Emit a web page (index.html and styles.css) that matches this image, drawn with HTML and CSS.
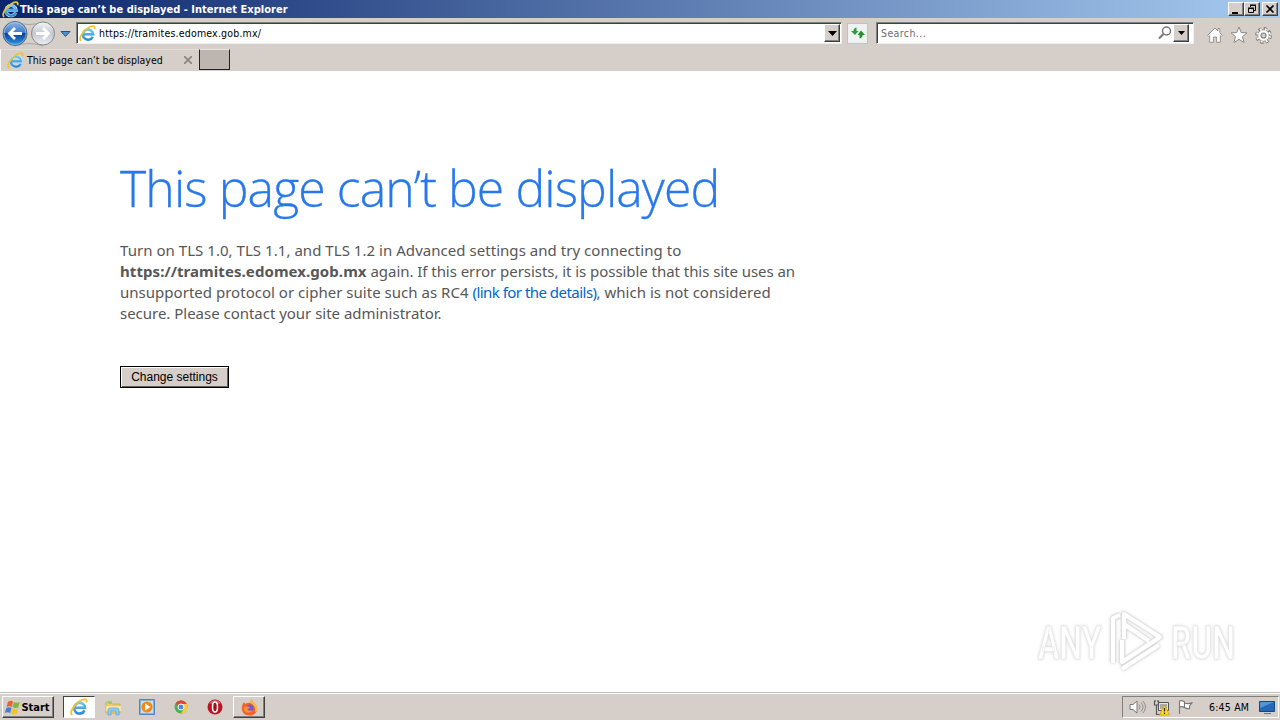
FILE: index.html
```html
<!DOCTYPE html>
<html lang="en">

<head>
  <meta charset="UTF-8">
  <meta name="viewport" content="width=device-width, initial-scale=1.0">
  <title>This page can’t be displayed</title>
  <link rel="stylesheet" href="styles.css">
</head>

<body>
  <!-- shared icon shapes -->
  <svg class="defs" width="0" height="0">
    <defs>
      <linearGradient id="ieBlue" x1="0" y1="0" x2="0" y2="1">
        <stop offset="0" stop-color="#69c8f5" />
        <stop offset="1" stop-color="#2f87d0" />
      </linearGradient>
      <linearGradient id="backBlue" x1="0" y1="0" x2="0" y2="1">
        <stop offset="0" stop-color="#8fb6e6" />
        <stop offset="0.48" stop-color="#3c78c8" />
        <stop offset="0.5" stop-color="#0b3f9c" />
        <stop offset="1" stop-color="#2f9be8" />
      </linearGradient>
      <linearGradient id="forwardGray" x1="0" y1="0" x2="0" y2="1">
        <stop offset="0" stop-color="#f5f6f8" />
        <stop offset="0.5" stop-color="#c3c8d0" />
        <stop offset="1" stop-color="#eceff3" />
      </linearGradient>
      <symbol id="ie" viewBox="0 0 16 16">
        <path d="M12.900 11A4.800 4.800 0 1 1 13.300 8.700H4.400" fill="none" stroke="#d8f0ff" stroke-width="3" />
        <path d="M12.900 11A4.800 4.800 0 1 1 13.300 8.700H4.400" fill="none" stroke="url(#ieBlue)" stroke-width="2.200" />
        <path d="M2 15C-.8 13 3.200 6.500 8 3.200 12 .4 15.700.2 14.700 4" fill="none" stroke="#efc230" stroke-width="1.600" />
      </symbol>
    </defs>
  </svg>

  <div class="titlebar">
    <svg class="title-icon" width="17" height="17"><use href="#ie" /></svg>
    <span class="title-text">This page can’t be displayed - Internet Explorer</span>
    <div class="window-buttons">
      <button><svg width="14" height="12"><path d="M3 9h6v2H3z" /></svg></button>
      <button><svg width="14" height="12"><path d="M5.500 4V2.500h5v5H9M5 2h6" fill="none" stroke="#000" /><path d="M3.500 5.500h5v4h-5zM3 5h6" fill="none" stroke="#000" /></svg></button>
      <button class="close"><svg width="14" height="12"><path d="M3.500 2.500l7 7M10.500 2.500l-7 7" stroke="#000" stroke-width="1.700" /></svg></button>
    </div>
  </div>

  <div class="navbar">
    <svg class="history" width="74" height="30" viewBox="0 0 74 30">
      <path d="M15 3Q29 8 43 3M15 27Q29 22 43 27" fill="none" stroke="#aaa7a4" />
      <circle cx="15" cy="14.500" r="12" fill="url(#backBlue)" stroke="#59677c" />
      <circle cx="15" cy="14.500" r="11" fill="none" stroke="#b8d3f0" stroke-opacity=".6" />
      <path d="M22 14.500H10M15 9L9.500 14.500l5.500 5.500" fill="none" stroke="#fff" stroke-width="2.800" />
      <circle cx="43" cy="14.500" r="11.500" fill="url(#forwardGray)" stroke="#85888c" />
      <path d="M36 14.500h12M43 9l5.500 5.500-5.500 5.500" fill="none" stroke="#fff" stroke-width="2.800" />
      <path d="M61 12.500h9l-4.500 5z" fill="#4f94cf" stroke="#24547f" />
    </svg>
    <div class="field address">
      <svg width="17" height="17"><use href="#ie" /></svg>
      <span>https://tramites.edomex.gob.mx/</span>
      <button class="drop"><svg width="9" height="5"><path d="M0 0h9L4.500 5z" /></svg></button>
    </div>
    <button class="refresh">
      <svg width="16" height="14" viewBox="0 0 16 14">
        <path d="M6.500 1.500Q3.500 2 3.500 5H1l4 4 3.500-4H6.500z" fill="#2c9b3c" />
        <path d="M9.500 12.500q3-.5 3-3.500H15l-4-4.500L7.500 9h2z" fill="#229030" />
      </svg>
    </button>
    <div class="field search">
      <span>Search...</span>
      <svg width="16" height="16" viewBox="0 0 16 16"><circle cx="9.500" cy="6" r="4" fill="none" stroke="#777" stroke-width="1.500" /><path d="M6.500 9L2 13.500" stroke="#777" stroke-width="2" /></svg>
      <button class="drop"><svg width="7" height="4"><path d="M0 0h7L3.500 4z" /></svg></button>
    </div>
    <div class="tools">
      <svg width="16" height="16" viewBox="0 0 16 16"><path d="M.7 8.300L8 1l2.800 2.800V1.700h2v4.100l2.500 2.500-1.200 1.200-.8-.8v6.600H9.600V10H6.400v5.300H2.700V8.700l-.8.800z" fill="#fff" stroke="#8d8985" stroke-width=".9" /></svg>
      <svg width="18" height="18" viewBox="0 0 18 18"><path d="M9 1l2.200 5.500 5.800.4-4.500 3.700 1.500 5.900L9 13.300l-5 3.200 1.500-5.900L1 6.900l5.800-.4z" fill="#fff" stroke="#8d8985" /></svg>
      <svg width="17" height="17" viewBox="0 0 16 16"><circle cx="8" cy="8" r="6.300" fill="none" stroke="#85807c" stroke-width="3.200" stroke-dasharray="3 1.948" /><circle cx="8" cy="8" r="5.400" fill="#fff" stroke="#85807c" stroke-width=".8" /><circle cx="8" cy="8" r="6" fill="none" stroke="#fff" stroke-width="2" stroke-dasharray="1.600 3.112" stroke-dashoffset="-.6" /><circle cx="8" cy="8" r="2.400" fill="#d4cec8" stroke="#85807c" /></svg>
    </div>
  </div>

  <div class="tabs">
    <div class="tab">
      <svg width="17" height="17"><use href="#ie" /></svg>
      <span>This page can’t be displayed</span>
      <svg class="tab-close" width="8" height="8"><path d="M0 0l8 8M8 0L0 8" stroke="#8d8783" stroke-width="1.800" /></svg>
    </div>
    <button class="new-tab"></button>
  </div>

  <main class="page">
    <h1>This page can’t be displayed</h1>
    <p class="message">
      <span class="line-one">Turn on TLS 1.0, TLS 1.1, and TLS 1.2 in Advanced settings and try connecting to</span><br>
      <strong>https://tramites.edomex.gob.mx</strong> <span class="line-two">again. If this error persists, it is possible that this site uses an</span><br>
      <span class="line-three">unsupported protocol or cipher suite such as RC4 <a>(link for the details)</a>, which is not considered</span><br>
      <span class="line-four">secure. Please contact your site administrator.</span>
    </p>
    <button class="settings">Change settings</button>

    <div class="watermark">
      <span class="any">ANY</span>
      <svg width="60" height="64" viewBox="0 0 60 64">
        <g fill="none" stroke="#dedede" stroke-width="5.500" stroke-linejoin="round">
          <path d="M7 54V9l7-3M18 30V5l36 23-38 25V31M18 15l25 17M16 60l37-24" />
        </g>
        <g fill="none" stroke="#fff" stroke-width="4" stroke-linejoin="round">
          <path d="M7 54V9l7-3M18 30V5l36 23-38 25V31M18 15l25 17M16 60l37-24" />
        </g>
      </svg>
      <span class="run">RUN</span>
    </div>
  </main>

  <footer class="taskbar">
    <button class="start">
      <svg width="17" height="17" viewBox="0 0 17 17">
        <path d="M4 3q3-2 5-.5L7.700 8Q5 6.500 2.500 8z" fill="#e8622a" />
        <path d="M9.800 3q3 1.500 6 0l-1.500 5.500q-3 1-5.800-.2z" fill="#79b943" />
        <path d="M2.300 9q3-1.500 5.200 0L6.200 14Q3.500 12.500.8 14z" fill="#3d82d0" />
        <path d="M8.300 9.500q3 1.200 5.800 0L12.500 15q-3 1-5.600-.5z" fill="#f3c32f" />
      </svg>
      <span>Start</span>
    </button>
    <div class="task active"><svg width="18" height="18"><use href="#ie" /></svg></div>
    <div class="task">
      <svg width="17" height="17" viewBox="0 0 17 17">
        <path d="M1 3h5l1 2h8v9H1z" fill="#e9cd6c" stroke="#c8a84c" stroke-width=".7" />
        <path d="M3 2h4v3H3z" fill="#9acb77" /><path d="M1 7h15v5H1z" fill="#f8e6a0" />
        <path d="M3 16v-5q0-2 2-2h7q2 0 2 2v5h-3v-4H6v4z" fill="#8fcdea" stroke="#5a9fc0" stroke-width=".6" />
      </svg>
    </div>
    <div class="task">
      <svg width="16" height="16" viewBox="0 0 16 16">
        <path d="M.5.5h15v15H.5z" fill="#7db5e3" stroke="#4c87bd" /><path d="M2 2h12v12H2z" fill="#c4dff5" />
        <circle cx="8" cy="8" r="5.600" fill="#f18a18" /><path d="M6 4.500l5.500 3.500L6 11.500z" fill="#fff" />
      </svg>
    </div>
    <div class="task">
      <svg width="14" height="14" viewBox="0 0 14 14">
        <circle cx="7" cy="7" r="6.500" fill="#4caf50" />
        <path d="M7 7L1.400 3.700A6.500 6.500 0 0 1 12.700 3.900H7z" fill="#df4535" />
        <path d="M7 4h5.800A6.500 6.500 0 0 1 7 13.500l3-5z" fill="#f7cd3b" />
        <circle cx="7" cy="7" r="3" fill="#4c8be8" stroke="#fff" stroke-width="1" />
      </svg>
    </div>
    <div class="task">
      <svg width="16" height="16" viewBox="0 0 16 16"><circle cx="8" cy="8" r="7.500" fill="#b91523" /><path d="M2 4Q8-2 14 4 8 7 2 4" fill="#d65a60" /><ellipse cx="8" cy="8" rx="2.500" ry="5" fill="#9d1020" stroke="#fff" stroke-width="1.500" /></svg>
    </div>
    <div class="task raised">
      <svg width="17" height="17" viewBox="0 0 17 17">
        <path d="M1.500 6Q2 3 3 3.500L4.500 5Q7 3 9 4q0-3 2-3.500Q11 3 13 4q4 3 3 7.500-2 5-7.500 5Q1 16 .7 9.500.7 7 1.500 6" fill="#f4602e" />
        <path d="M11 .5Q11 3 13 4q4 3 3 7.500L14 13q1-7-5-9 0-2 2-3.500" fill="#ffc43a" />
        <circle cx="9" cy="9" r="3.600" fill="#7958c8" /><path d="M3 8q3-1 6 0-1 2-3 2 2 3 6 1-3 4-7 2-3-2-2-5" fill="#ff9334" />
      </svg>
    </div>
    <div class="tray">
      <svg width="17" height="16" viewBox="0 0 17 16"><path d="M1 5.500h3L8 2v12l-4-3.500H1z" fill="#fff" stroke="#777" /><path d="M10 5.500q2 2.500 0 5M12 3.500q4 4.500 0 9M14 2q5 6 0 12" fill="none" stroke="#888" stroke-width=".9" /></svg>
      <svg width="17" height="17" viewBox="0 0 17 17"><path d="M5.500 3.500h10v8h-10z" fill="#e4e4e0" stroke="#555" /><path d="M7 5h7v5H7z" fill="#aaa" /><path d="M1.500 2v4h4V2M3.500 6v10M2 1v2M5 1v2M3 15.500h5" fill="none" stroke="#555" stroke-width="1.200" /><path d="M11.500 6l5 10h-10z" fill="#ffdc24" stroke="#c8950a" stroke-width=".7" /><path d="M11.500 9v3.500M11.500 13.500V15" stroke="#333" stroke-width="1.300" /></svg>
      <svg width="17" height="16" viewBox="0 0 17 16"><path d="M2.500 15V1.500M2.500 2q3-1 5 1v5.500q-2-1.500-5-.5M7.500 4q4 1.500 8-.5l-3 3.500v2.500q-2.500.5-5-1" fill="#fff" stroke="#777" stroke-width="1.100" /></svg>
      <span class="clock">6:45 AM</span>
      <svg width="16" height="15" viewBox="0 0 16 15"><path d="M.5 1.500h15v10H.5z" fill="#2468b8" stroke="#17477f" /><path d="M1 2h14L1 8z" fill="#5793d5" /><path d="M5 13.500h7" stroke="#60778e" /></svg>
    </div>
  </footer>
</body>

</html>
```
FILE: styles.css
```css
* {
  box-sizing: border-box;
}

body {
  margin: 0;
  height: 720px;
  display: flex;
  flex-direction: column;
  overflow: hidden;
  background: #fff;
  color: #000;
  font-family: 'DejaVu Sans Condensed', 'DejaVu Sans', sans-serif;
  font-size: 10.5px;
}

svg {
  display: block;
  flex: none;
}

button {
  display: flex;
  align-items: center;
  justify-content: center;
  padding: 0;
  background: #d5cec9;
  border: 1px solid;
  border-color: #fff #404040 #404040 #fff;
  box-shadow: inset -1px -1px #808080;
  color: #000;
}

.defs {
  position: absolute;
}

.titlebar {
  display: flex;
  align-items: center;
  height: 18px;
  padding: 0 2px;
  background: linear-gradient(to right, #0a246a, #a6caf0);
  color: #fff;
  font-weight: bold;
}

.title-text {
  margin-left: 1px;
  white-space: nowrap;
  font-size: 11px;
  letter-spacing: 0.02px;
}

.window-buttons {
  display: flex;
  margin-left: auto;
}

.window-buttons button {
  width: 16px;
  height: 14px;
}

.window-buttons .close {
  margin-left: 2px;
}

.navbar {
  display: flex;
  align-items: center;
  height: 31px;
  background: #d5cec9;
}

.field {
  display: flex;
  align-items: center;
  height: 22px;
  margin-bottom: 1px;
  background: #fff;
  border: 1px solid;
  border-color: #808080 #eee #eee #808080;
  box-shadow: inset 1px 1px #404040;
}

.address {
  width: 766px;
  margin-left: 2px;
  padding: 0 1px 0 2px;
}

.address span {
  margin-left: 3px;
  letter-spacing: 0.19px;
}

.drop {
  width: 16px;
  height: 18px;
  margin-left: auto;
}

.refresh {
  width: 21px;
  height: 21px;
  margin: 0 8px 1px 5px;
  background: #eef3f2;
  border-color: #b9c5ca;
  box-shadow: none;
}

.search {
  width: 318px;
  padding: 0 4px 0 4px;
  color: #6d6d6d;
}

.search span {
  letter-spacing: 0.4px;
}

.search svg {
  margin-left: auto;
}

.search .drop,
.search .drop svg {
  margin-left: 0;
}

.tools {
  display: flex;
  align-items: center;
  gap: 7px;
  margin: 3px 0 0 13px;
}

.tabs {
  display: flex;
  height: 22px;
  background: #d5cec9;
}

.tab {
  display: flex;
  align-items: center;
  width: 199px;
  height: 22px;
  padding: 0 7px 1px 6px;
  border-left: 1px solid #fff;
  border-top: 1px solid #e2ddd7;
}

.tab span {
  margin-left: 3px;
}

.tab-close {
  margin-left: auto;
}

.new-tab {
  width: 31px;
  height: 21px;
  background: #bcb5b0;
  border-color: #e9e5e1 #222 #222 #222;
  box-shadow: none;
}

.page {
  position: relative;
  flex: 1;
  padding: 82px 0 0 120px;
  color: #575757;
  font-family: 'Open Sans', 'Noto Sans', sans-serif;
}

h1 {
  margin: 0;
  color: #2778ec;
  font-size: 50px;
  font-weight: 300;
  line-height: 70px;
  letter-spacing: -0.92px;
  white-space: nowrap;
  -webkit-text-stroke: 0.3px #2778ec;
}

.message {
  margin: 17px 0 0;
  font-family: 'Noto Sans', sans-serif;
  font-size: 15px;
  line-height: 21px;
  white-space: nowrap;
}

.message strong {
  letter-spacing: 0.07px;
}

.line-one {
  letter-spacing: 0.04px;
}

.line-two {
  letter-spacing: -0.05px;
}

.line-three {
  letter-spacing: 0.02px;
}

.line-four {
  letter-spacing: -0.02px;
}

.message a {
  color: #0066cc;
  letter-spacing: -0.53px;
}

.settings {
  width: 109px;
  height: 22px;
  margin-top: 42px;
  border-color: #000;
  box-shadow: inset 1px 1px #fff, inset -1px -1px #606060;
  font-family: 'Liberation Sans', sans-serif;
  font-size: 12px;
}

/* logo floats over the corner of the page */
.watermark {
  position: absolute;
  right: 45px;
  bottom: 19px;
  display: flex;
  align-items: center;
  color: #fff;
  filter: drop-shadow(0 0 1.5px #d0d0d0);
  font-family: 'Roboto', sans-serif;
  font-size: 46px;
  font-weight: 500;
}

.watermark span {
  width: 64px;
  padding-top: 4px;
  -webkit-text-stroke: 0.5px #e4e4e4;
  transform: scaleX(0.7);
  transform-origin: left;
}

.watermark svg {
  margin: 0 5px 0 4px;
}

.taskbar {
  display: flex;
  align-items: center;
  height: 28px;
  padding: 2px 1px 1px 2px;
  background: #d5cec9;
  border-top: 1px solid #c5bfb9;
  box-shadow: inset 0 1px #fff;
}

.start {
  width: 52px;
  height: 22px;
  margin-right: 9px;
  padding-right: 2px;
  font-family: inherit;
  font-size: 11px;
  font-weight: bold;
}

.task {
  display: flex;
  align-items: center;
  justify-content: center;
  width: 32px;
  height: 22px;
  margin-right: 2px;
}

.active {
  background: #fff;
  border: 1px solid;
  border-color: #404040 #fff #fff #404040;
}

.raised {
  border: 1px solid;
  border-color: #fff #404040 #404040 #fff;
  box-shadow: inset -1px -1px #808080;
}

.tray {
  display: flex;
  align-items: center;
  width: 157px;
  height: 22px;
  margin-left: auto;
  padding: 0 1px 0 6px;
  gap: 7px;
  border: 1px solid;
  border-color: #808080 #fff #fff #808080;
}

.clock {
  margin: 0 3px 0 8px;
  white-space: nowrap;
  letter-spacing: 0.2px;
}
```
